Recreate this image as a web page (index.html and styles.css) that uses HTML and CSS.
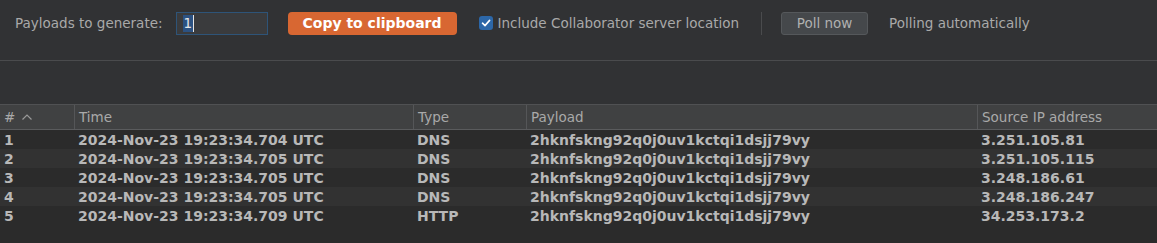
FILE: index.html
```html
<!DOCTYPE html>
<html>
<head>
<meta charset="utf-8">
<link rel="stylesheet" href="styles.css">
</head>
<body>
<div class="app">
  <div class="toolbar">
    <span class="label">Payloads to generate:</span>
    <div class="input"><span class="sel">1</span><span class="caret"></span></div>
    <button class="copy">Copy to clipboard</button>
    <label class="check">
      <span class="box"><svg width="10" height="10" viewBox="0 0 10 10"><path d="M1.5 5.2 L4 7.6 L8.6 2.4" fill="none" stroke="#fff" stroke-width="1.6" stroke-linecap="round" stroke-linejoin="round"/></svg></span>
      <span>Include Collaborator server location</span>
    </label>
    <span class="sep"></span>
    <button class="poll">Poll now</button>
    <span class="label status">Polling automatically</span>
  </div>
  <div class="spacer"></div>
  <div class="table">
    <div class="row head">
      <div class="c c1">#<svg class="sort" width="12" height="8" viewBox="0 0 12 8"><path d="M1.5 6.5 L6 2 L10.5 6.5" fill="none" stroke="#999" stroke-width="1.2"/></svg></div>
      <div class="c c2">Time</div>
      <div class="c c3">Type</div>
      <div class="c c4">Payload</div>
      <div class="c c5">Source IP address</div>
    </div>
    <div class="row">
      <div class="c c1">1</div><div class="c c2">2024-Nov-23 19:23:34.704 UTC</div><div class="c c3">DNS</div><div class="c c4">2hknfskng92q0j0uv1kctqi1dsjj79vy</div><div class="c c5">3.251.105.81</div>
    </div>
    <div class="row">
      <div class="c c1">2</div><div class="c c2">2024-Nov-23 19:23:34.705 UTC</div><div class="c c3">DNS</div><div class="c c4">2hknfskng92q0j0uv1kctqi1dsjj79vy</div><div class="c c5">3.251.105.115</div>
    </div>
    <div class="row">
      <div class="c c1">3</div><div class="c c2">2024-Nov-23 19:23:34.705 UTC</div><div class="c c3">DNS</div><div class="c c4">2hknfskng92q0j0uv1kctqi1dsjj79vy</div><div class="c c5">3.248.186.61</div>
    </div>
    <div class="row">
      <div class="c c1">4</div><div class="c c2">2024-Nov-23 19:23:34.705 UTC</div><div class="c c3">DNS</div><div class="c c4">2hknfskng92q0j0uv1kctqi1dsjj79vy</div><div class="c c5">3.248.186.247</div>
    </div>
    <div class="row">
      <div class="c c1">5</div><div class="c c2">2024-Nov-23 19:23:34.709 UTC</div><div class="c c3">HTTP</div><div class="c c4">2hknfskng92q0j0uv1kctqi1dsjj79vy</div><div class="c c5">34.253.173.2</div>
    </div>
  </div>
</div>
</body>
</html>
```
FILE: styles.css
```css
* { box-sizing: border-box; }
html, body { margin: 0; padding: 0; background: #2b2b2b; }
.app {
  width: 1157px; height: 243px; overflow: hidden;
  font-family: "DejaVu Sans", sans-serif; font-size: 13.5px; color: #b4b4b4;
  background: #2b2b2b;
}
.toolbar {
  height: 60px; background: #313234;
  display: flex; align-items: center; padding: 0 0 14px 15px;
}
.label { color: #a9a9a9; }
.input {
  margin-left: 13px; width: 92px; height: 23px;
  border: 1px solid #2e5478; background: #3a3b3d;
  display: flex; align-items: center; padding-left: 6px;
}
.input .sel { background: #2c5282; color: #e6e6e6; line-height: 17px; padding: 0 1px; }
.input .caret { width: 1px; height: 17px; background: #e6e6e6; }
.copy {
  margin-left: 20px; width: 169px; height: 23px;
  background: #d86732; border: none; border-radius: 4px;
  color: #fff; font: bold 14px "DejaVu Sans", sans-serif;
  padding: 0;
}
.check { display: flex; align-items: center; margin-left: 22px; color: #a9a9a9; }
.box {
  width: 14px; height: 14px; border-radius: 3px; background: #2c67a8;
  display: flex; align-items: center; justify-content: center; margin-right: 5px;
}
.sep { width: 1px; height: 23px; background: #4a4b4d; margin-left: 22px; }
.poll {
  margin-left: 19px; width: 87px; height: 23px;
  background: #45484b; border: 1px solid #55585b; border-radius: 3px;
  color: #b0b0b0; font: 13.5px "DejaVu Sans", sans-serif; padding: 0;
}
.status { margin-left: 21px; }
.spacer {
  height: 44px; background: #313234; border-top: 1px solid #4a4b4d;
}
.table { background: #2b2b2b; }
.row { display: flex; height: 19px; align-items: center; }
.row:nth-child(odd):not(.head) { background: #323232; }
.row.head {
  height: 26px; background: #404142;
  border-top: 1px solid #505153; border-bottom: 1px solid #5a5b5d;
  color: #a9a9a9;
}
.c { white-space: nowrap; overflow: hidden; padding-left: 4px; height: 100%; display: flex; align-items: center; }
.row:not(.head) .c { font-weight: bold; color: #b8b8b8; font-size: 14px; }
.head .c { border-left: 1px solid #555658; }
.head .c1 { border-left: none; }
.c1 { width: 74px; }
.c2 { width: 339px; }
.c3 { width: 113px; }
.c4 { width: 451px; }
.c5 { flex: 1; }
.sort { margin-left: 6px; }
```
